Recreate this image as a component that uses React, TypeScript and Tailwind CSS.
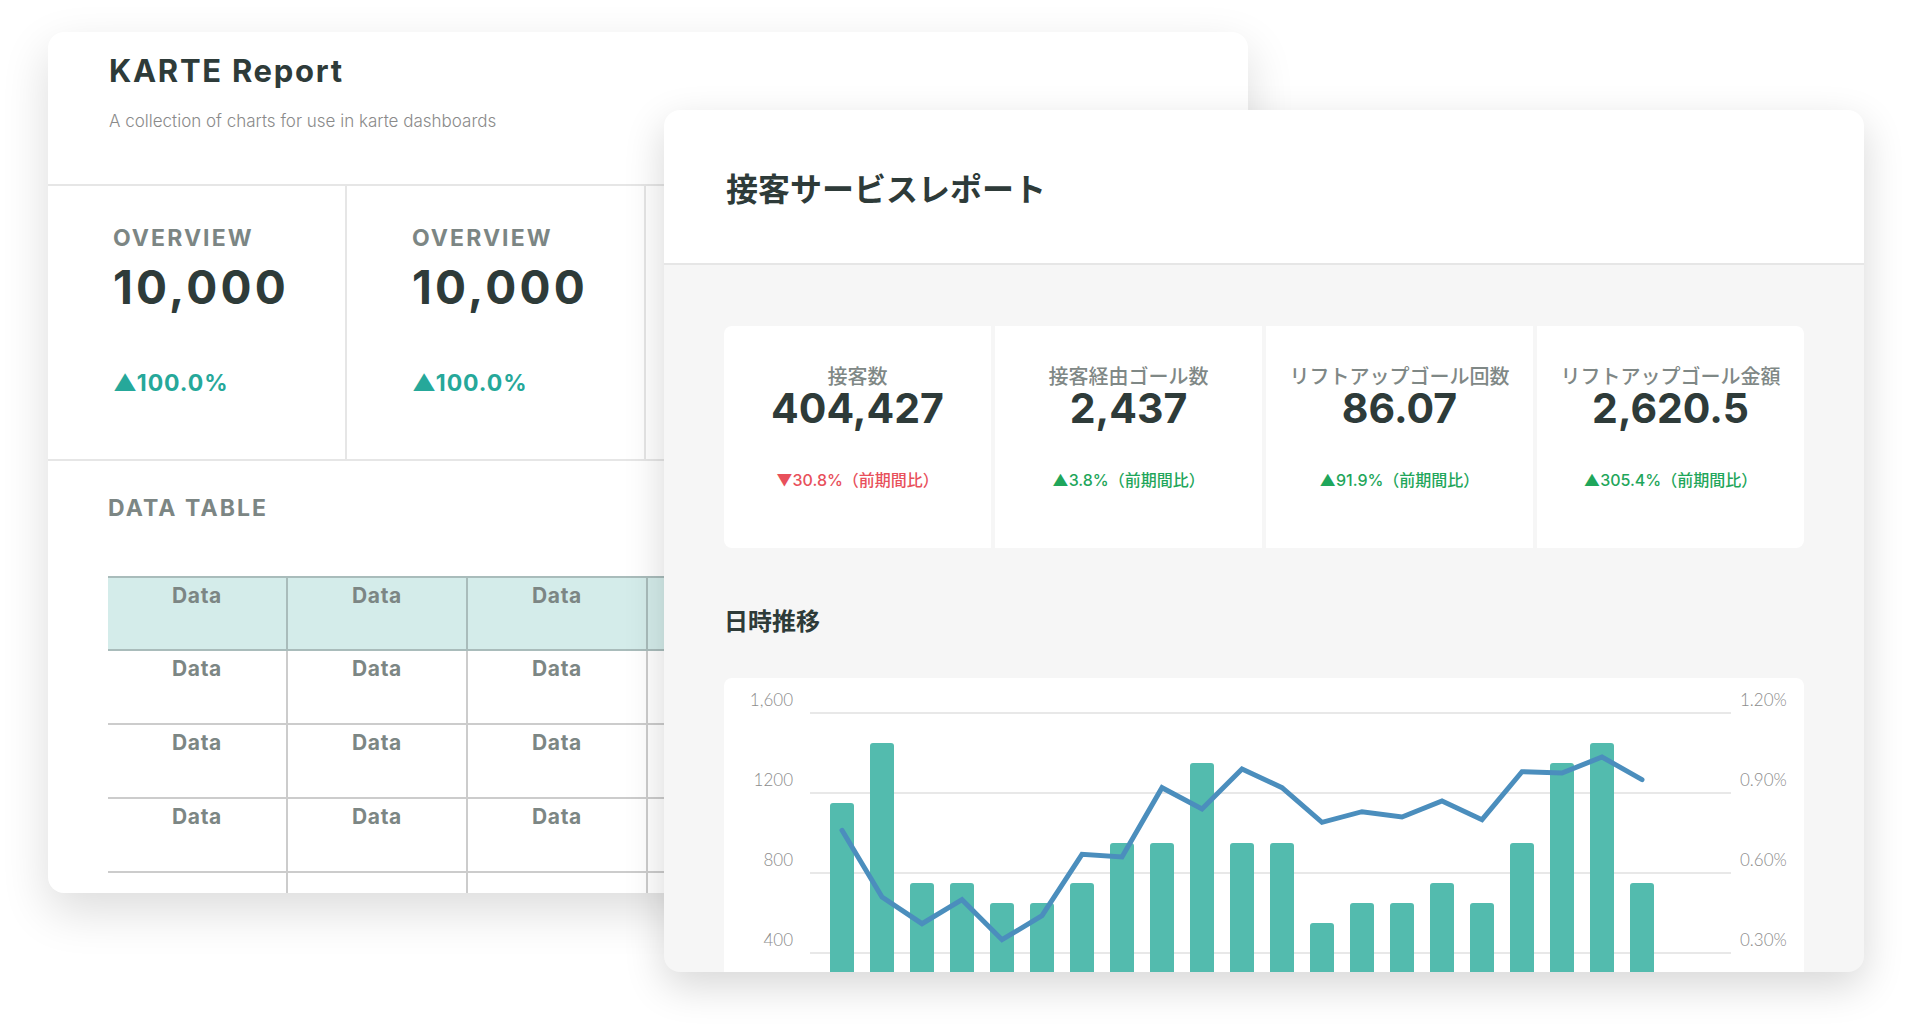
import React from 'react';

// hourly sessions (bars) and conversion rate in % (line)
const sessions = [1150, 1450, 750, 750, 650, 650, 750, 950, 950, 1350, 950, 950, 550, 650, 650, 750, 650, 950, 1350, 1450, 750];
const rates = [0.76, 0.51, 0.41, 0.5, 0.35, 0.44, 0.67, 0.66, 0.92, 0.84, 0.99, 0.92, 0.79, 0.83, 0.81, 0.87, 0.8, 0.98, 0.975, 1.035, 0.95];

const kpis = [
  { label: '接客数', value: '404,427', change: '▼30.8%（前期間比）', up: false },
  { label: '接客経由ゴール数', value: '2,437', change: '▲3.8%（前期間比）', up: true },
  { label: 'リフトアップゴール回数', value: '86.07', change: '▲91.9%（前期間比）', up: true },
  { label: 'リフトアップゴール金額', value: '2,620.5', change: '▲305.4%（前期間比）', up: true },
];

const BASE_Y = 355; // y of zero on both axes
const grid = [35, 115, 195, 275];
const leftTicks = ['1,600', '1200', '800', '400'];
const rightTicks = ['1.20%', '0.90%', '0.60%', '0.30%'];

const TimeChart = () => {
  const points = rates.map((r, i) => `${118 + i * 40},${(BASE_Y - (r / 0.3) * 80).toFixed(1)}`).join(' ');
  return (
    <svg width={1080} height={360} className="block">
      {grid.map((y, i) => (
        <g key={y}>
          <line x1={86} x2={1007} y1={y} y2={y} stroke="#e8e8e8" strokeWidth={2} />
          <text x={69} y={y - 7} textAnchor="end" fontSize={17} fontWeight={300} fill="#8c8c8c" fontFamily="Lato, sans-serif">
            {leftTicks[i]}
          </text>
          <text x={1016} y={y - 7} fontSize={17} fontWeight={300} fill="#8c8c8c" fontFamily="Lato, sans-serif">
            {rightTicks[i]}
          </text>
        </g>
      ))}
      {sessions.map((v, i) => (
        <rect key={i} x={106 + i * 40} y={BASE_Y - v * 0.2} width={24} height={v * 0.2 + 20} rx={3} fill="#53bbae" />
      ))}
      <polyline points={points} fill="none" stroke="#4b8ebd" strokeWidth={5} strokeLinecap="round" strokeLinejoin="miter" />
    </svg>
  );
};

const OverviewCell = () => (
  <div className="flex h-full w-[299px] shrink-0 flex-col border-r-2 border-[#e6e6e6] pl-[65px] pt-[38px]">
    <div className="text-[23px] font-bold leading-[28px] tracking-[0.09em] text-[#7c8684]">OVERVIEW</div>
    <div className="mt-[9px] text-[46px] font-bold leading-[52px] tracking-[0.07em] text-[#2e3b39]">10,000</div>
    <div className="mt-[56px] text-[23px] font-bold leading-[28px] tracking-[0.04em] text-[#26a89a]">▲100.0%</div>
  </div>
);

const columns = [0, 1, 2, 3, 4, 5];

const TableRow = ({ header, blank }: { header?: boolean; blank?: boolean }) => (
  <div
    className={
      header
        ? 'flex h-[75px] border-y-2 border-black/20 bg-[#d4ecea]'
        : 'flex h-[74px] border-b-2 border-black/20'
    }
  >
    {columns.map((c) => (
      <div key={c} className="w-[180px] shrink-0 border-r-2 border-black/20 pt-[6px] text-center text-[21px] font-bold leading-[24px] tracking-[0.03em] text-[#7c8684]">
        {blank ? '' : 'Data'}
      </div>
    ))}
  </div>
);

export default function App() {
  return (
    <div className="relative h-[1036px] w-[1912px] overflow-hidden bg-white pl-[48px] pt-[32px] font-['Inter','Noto_Sans_CJK_JP',sans-serif]">
      {/* report overview card */}
      <div className="h-[861px] w-[1200px] overflow-hidden rounded-2xl bg-white shadow-[0_18px_48px_rgba(0,0,0,0.14)]">
        <div className="h-[154px] border-b-2 border-[#e6e6e6] pl-[61px] pt-[21px]">
          <h1 className="text-[31px] font-bold leading-[36px] tracking-[0.055em] text-[#2e3b39]">KARTE Report</h1>
          <p className="mt-[20px] text-[17px] font-light leading-[24px] text-[#8a8a8a]">A collection of charts for use in karte dashboards</p>
        </div>
        <div className="flex h-[275px] border-b-2 border-[#e6e6e6]">
          <OverviewCell />
          <OverviewCell />
          <OverviewCell />
          <OverviewCell />
        </div>
        <div className="pl-[60px] pt-[33px]">
          <div className="text-[23px] font-bold leading-[28px] tracking-[0.09em] text-[#7c8684]">DATA TABLE</div>
          <div className="mt-[54px]">
            <TableRow header />
            <TableRow />
            <TableRow />
            <TableRow />
            <TableRow blank />
          </div>
        </div>
      </div>

      {/* service report card */}
      <div className="absolute left-[664px] top-[110px] h-[862px] w-[1200px] overflow-hidden rounded-2xl bg-[#f6f6f6] shadow-[0_14px_40px_rgba(0,0,0,0.16)]">
        <div className="h-[155px] border-b-2 border-[#e6e6e6] bg-white pl-[62px] pt-[64px]">
          <h2 className="text-[32px] font-bold leading-[32px] text-[#2e3b39]">接客サービスレポート</h2>
        </div>
        <div className="px-[60px] pt-[61px]">
          <div className="grid h-[222px] grid-cols-4 gap-[4px] overflow-hidden rounded-lg">
            {kpis.map((k) => (
              <div key={k.label} className="flex flex-col items-center bg-white pt-[41px]">
                <div className="text-[20px] font-medium leading-[20px] text-[#7f8886]">{k.label}</div>
                <div className="text-[41px] font-bold leading-[42px] text-[#2e3b39]">{k.value}</div>
                <div className={`mt-[41px] text-[16px] font-medium leading-[20px] ${k.up ? 'text-[#1fa65b]' : 'text-[#e8505b]'}`}>
                  {k.change}
                </div>
              </div>
            ))}
          </div>
          <h3 className="mt-[62px] text-[24px] font-bold leading-[24px] text-[#2e3b39]">日時推移</h3>
          <div className="mt-[44px] h-[400px] rounded-t-lg bg-white">
            <TimeChart />
          </div>
        </div>
      </div>
    </div>
  );
}
